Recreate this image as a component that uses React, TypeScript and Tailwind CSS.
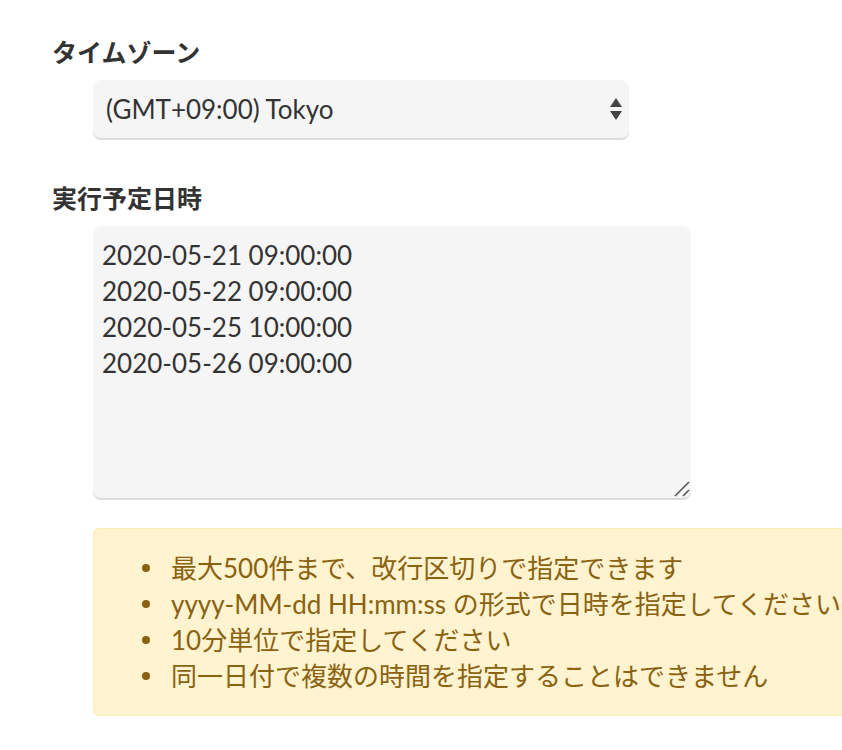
const schedule = [
  "2020-05-21 09:00:00",
  "2020-05-22 09:00:00",
  "2020-05-25 10:00:00",
  "2020-05-26 09:00:00",
].join("\n");

const notes = [
  "最大500件まで、改行区切りで指定できます",
  "yyyy-MM-dd HH:mm:ss の形式で日時を指定してください(例: 2020-05-21 09:00:00)",
  "10分単位で指定してください",
  "同一日付で複数の時間を指定することはできません",
];

const font = { fontFamily: 'Lato, "Noto Sans CJK JP", sans-serif' };

export default function App() {
  return (
    <div className="w-[842px] h-[750px] overflow-hidden bg-white text-[#333]" style={font}>
      <div className="pt-[34px] pl-[52px]">
        {/* Timezone */}
        <label className="block text-[25px] leading-[36px] font-bold text-[#333]">タイムゾーン</label>
        <div className="relative mt-[10px] ml-[41px] w-[536px]">
          <select
            defaultValue="Asia/Tokyo"
            className="appearance-none w-full h-[58px] pl-[13px] pr-10 rounded-lg bg-[#f5f5f5] text-[26px] text-[#333] shadow-[0_2px_0_#dcdcdc] outline-none"
            style={font}
          >
            <option value="Asia/Tokyo">(GMT+09:00) Tokyo</option>
          </select>
          <svg
            className="absolute right-[7px] top-[18px] pointer-events-none"
            width="12"
            height="22"
            viewBox="0 0 12 22"
          >
            <path d="M6 0 L12 9 H0 Z" fill="#444" />
            <path d="M0 13 H12 L6 22 Z" fill="#444" />
          </svg>
        </div>

        {/* Scheduled times */}
        <label className="block mt-[42px] text-[25px] leading-[36px] font-bold text-[#333]">実行予定日時</label>
        <div className="relative mt-[10px] ml-[41px] w-[598px]">
          <textarea
            defaultValue={schedule}
            className="block w-full h-[272px] px-[9px] py-[11px] resize-none rounded-lg bg-[#f5f5f5] text-[26px] leading-[36px] text-[#333] shadow-[0_2px_0_#dcdcdc] outline-none"
            style={font}
          />
          {/* resize grip */}
          <svg
            className="absolute right-[1px] bottom-[1px] pointer-events-none"
            width="16"
            height="16"
            viewBox="0 0 16 16"
          >
            <path d="M1 15 L15 1" stroke="#555" strokeWidth="1.6" />
            <path d="M9 15 L15 9" stroke="#555" strokeWidth="1.6" />
          </svg>
        </div>

        {/* Notes */}
        <div className="mt-[30px] ml-[41px] w-[800px] rounded-md border border-[#fdebb4] bg-[#fff3d0] py-[21px] pl-[48px] pr-4">
          <ul className="text-[26px] leading-[36px] text-[#8a6210]">
            {notes.map((n) => (
              <li key={n} className="flex items-center whitespace-nowrap">
                <span className="w-[8px] h-[8px] shrink-0 rounded-full bg-[#8a6210] mr-[21px]" />
                {n}
              </li>
            ))}
          </ul>
        </div>
      </div>
    </div>
  );
}
